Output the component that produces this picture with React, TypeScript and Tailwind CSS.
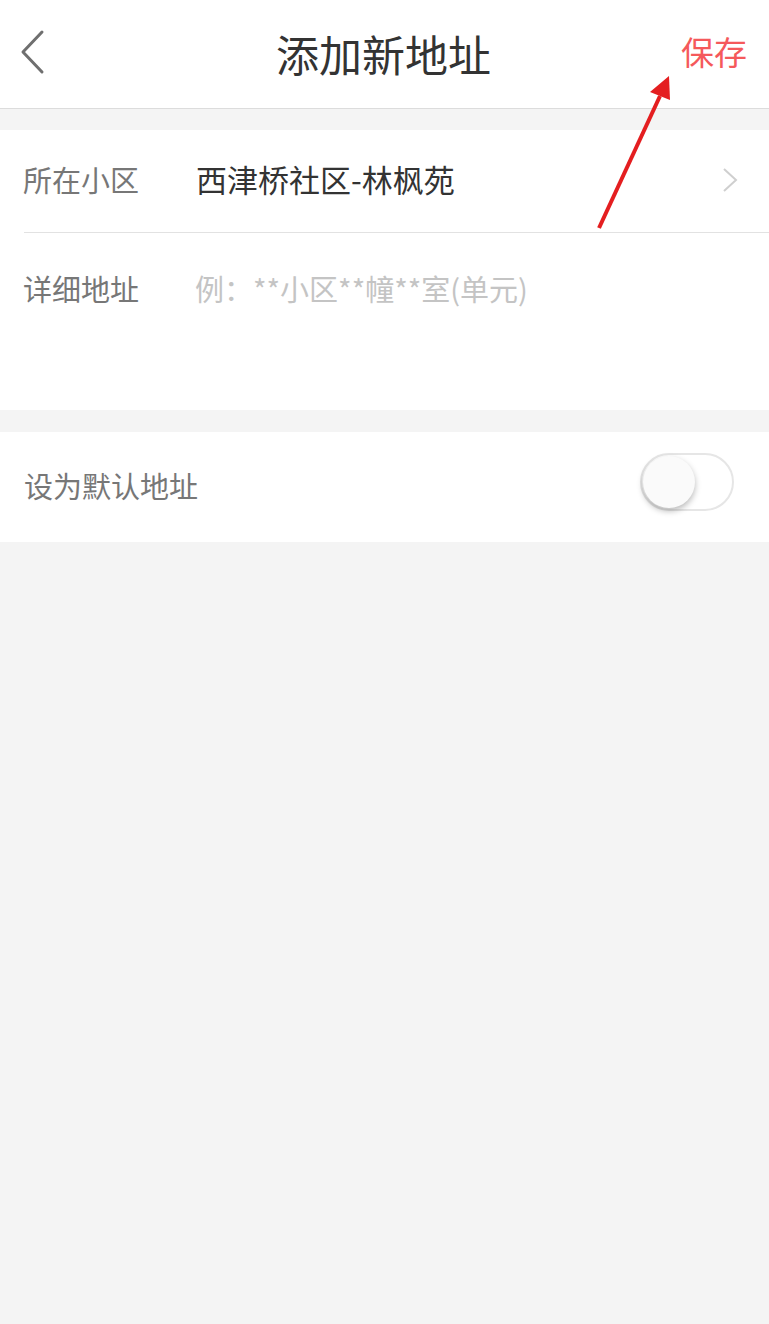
import React from "react";

const font = { fontFamily: '"Noto Sans CJK SC", "Noto Sans", sans-serif' };

export default function App() {
  return (
    <div className="relative min-h-[1324px] w-[769px] bg-[#f4f4f4]" style={font}>
      {/* header */}
      <div className="flex h-[109px] items-center justify-between border-b border-[#dcdcdc] bg-white pl-[18px] pr-[22px]">
        <svg width="28" height="46" viewBox="0 0 28 46" className="-mt-[4px]">
          <path d="M24 3 L5 23 L24 43" fill="none" stroke="#6f6f6f" strokeWidth="3" strokeLinecap="round" strokeLinejoin="round" />
        </svg>
        <h1 className="-mt-[2px] pl-[40px] text-[43px] leading-none text-[#333]">添加新地址</h1>
        <button className="-mt-[6px] text-[33px] leading-none text-[#f5595b]">保存</button>
      </div>

      <div className="mt-[21px] bg-white">
        <div className="flex h-[102px] items-center pb-[3px] pl-[23px] pr-[30px]">
          <span className="w-[173px] text-[29px] text-[#777]">所在小区</span>
          <span className="flex-1 text-[31px] text-[#333]">西津桥社区-林枫苑</span>
          <svg width="18" height="26" viewBox="0 0 18 26">
            <path d="M3 2 L15 13 L3 24" fill="none" stroke="#cfcfcf" strokeWidth="2" />
          </svg>
        </div>
        <div className="ml-[24px] h-px bg-[#e2e2e2]" />
        <div className="flex h-[177px] items-start pl-[23px] pt-[35px]">
          <span className="w-[172px] text-[29px] leading-[40px] text-[#777]">详细地址</span>
          <span className="text-[29px] leading-[40px] text-[#c4c4c4]">例：**小区**幢**室(单元)</span>
        </div>
      </div>

      <div className="mt-[22px] flex h-[110px] items-center justify-between bg-white pb-[2px] pl-[24px] pr-[35px]">
        <span className="text-[29px] text-[#777]">设为默认地址</span>
        <div className="relative -mt-[8px] h-[58px] w-[94px] rounded-full border-[2px] border-[#e6e6e6] bg-white">
          <div className="absolute left-[1px] top-[1px] h-[52px] w-[52px] rounded-full bg-[#fafafa] shadow-[0_3px_6px_rgba(0,0,0,0.28)]" />
        </div>
      </div>

      {/* red annotation arrow */}
      <svg className="pointer-events-none absolute left-0 top-0" width="769" height="260" viewBox="0 0 769 260">
        <line x1="599" y1="228" x2="660" y2="96" stroke="#e41e20" strokeWidth="4" />
        <polygon points="669,76 650,92 670,100" fill="#e41e20" />
      </svg>
    </div>
  );
}
